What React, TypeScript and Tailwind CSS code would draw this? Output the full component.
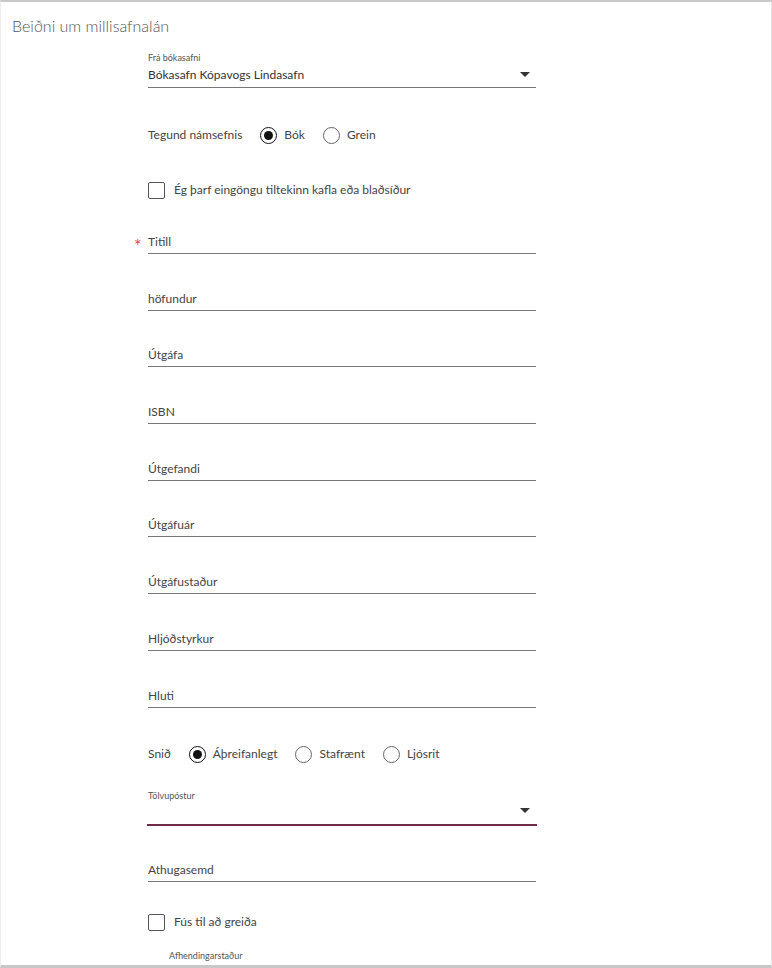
import React from "react";

const font = { fontFamily: "Lato, 'Noto Sans', sans-serif" };

function Arrow({ extra = "" }: { extra?: string }) {
  return (
    <svg width="10" height="6" viewBox="0 0 10 6" className={`absolute right-[6px] ${extra}`}>
      <path d="M0 0 L10 0 L5 5 Z" fill="#333" />
    </svg>
  );
}

function Radio({ checked }: { checked?: boolean }) {
  return checked ? (
    <span className="w-[17px] h-[17px] rounded-full border-[1.5px] border-[#111] flex items-center justify-center shrink-0">
      <span className="w-[9px] h-[9px] rounded-full bg-[#111]" />
    </span>
  ) : (
    <span className="w-[17px] h-[17px] rounded-full border border-[#666] shrink-0" />
  );
}

function Checkbox() {
  return <span className="w-[17px] h-[17px] rounded-[2px] border border-[#555] shrink-0" />;
}

function Field({ label, h, star }: { label: string; h: string; star?: boolean }) {
  return (
    <div className={`${h} flex flex-col justify-end`}>
      <div className="relative border-b border-[#777] pb-[2px] text-[12px] leading-[18px] text-[#444]">
        {star && <span className="absolute -left-[14px] top-[3px] text-[#e0483b] text-[18px] leading-[18px]">*</span>}
        {label}
      </div>
    </div>
  );
}

export default function App() {
  return (
    <div
      style={font}
      className="w-[772px] h-[968px] bg-white border-t-2 border-b-[3px] border-r border-l border-t-[#c8c8c8] border-b-[#c8c8c8] border-r-[#e4e4e4] border-l-[#eeeeee] overflow-hidden"
    >
      <div className="mt-[14px] h-[20px] pl-[11px] text-[16px] leading-[20px] font-light text-[#555]">
        Beiðni um millisafnalán
      </div>

      <div className="ml-[147px] w-[388px] flex flex-col">
        {/* Frá bókasafni */}
        <div className="mt-[16px] text-[9px] leading-[12px] text-[#555]">Frá bókasafni</div>
        <div className="mt-[2px] relative flex items-center h-[18px] text-[12px] leading-[18px] text-[#333]">
          Bókasafn Kópavogs Lindasafn
          <Arrow />
        </div>
        <div className="mt-[3px] h-px bg-[#777]" />

        {/* Tegund */}
        <div className="mt-[37px] h-[20px] flex items-center text-[12px] text-[#444]">
          <span>Tegund námsefnis</span>
          <span className="ml-[18px] flex items-center">
            <Radio checked />
            <span className="ml-[7px]">Bók</span>
          </span>
          <span className="ml-[18px] flex items-center">
            <Radio />
            <span className="ml-[7px]">Grein</span>
          </span>
        </div>

        {/* checkbox */}
        <div className="mt-[36px] h-[18px] flex items-center text-[12px] text-[#444]">
          <Checkbox />
          <span className="ml-[9px]">Ég þarf eingöngu tiltekinn kafla eða blaðsíður</span>
        </div>

        <Field label="Titill" h="h-[55px]" star />
        <Field label="höfundur" h="h-[57px]" />
        <Field label="Útgáfa" h="h-[56px]" />
        <Field label="ISBN" h="h-[57px]" />
        <Field label="Útgefandi" h="h-[57px]" />
        <Field label="Útgáfuár" h="h-[56px]" />
        <Field label="Útgáfustaður" h="h-[57px]" />
        <Field label="Hljóðstyrkur" h="h-[57px]" />
        <Field label="Hluti" h="h-[57px]" />

        {/* Snið */}
        <div className="mt-[36px] h-[20px] flex items-center text-[12px] text-[#444]">
          <span>Snið</span>
          <span className="ml-[18px] flex items-center">
            <Radio checked />
            <span className="ml-[7px]">Áþreifanlegt</span>
          </span>
          <span className="ml-[18px] flex items-center">
            <Radio />
            <span className="ml-[7px]">Stafrænt</span>
          </span>
          <span className="ml-[18px] flex items-center">
            <Radio />
            <span className="ml-[7px]">Ljósrit</span>
          </span>
        </div>

        {/* Tölvupóstur */}
        <div className="mt-[26px] text-[9px] leading-[12px] text-[#555]">Tölvupóstur</div>
        <div className="relative h-[22px]">
          <Arrow extra="top-[6px]" />
        </div>
        <div className="-mx-[1px] h-[2px] bg-[#6e2a47]" />

        <Field label="Athugasemd" h="h-[56px]" />

        <div className="mt-[31px] h-[18px] flex items-center text-[12px] text-[#444]">
          <Checkbox />
          <span className="ml-[9px]">Fús til að greiða</span>
        </div>

        <div className="mt-[19px] ml-[21px] text-[9px] leading-[12px] text-[#555]">Afhendingarstaður</div>
      </div>
    </div>
  );
}
